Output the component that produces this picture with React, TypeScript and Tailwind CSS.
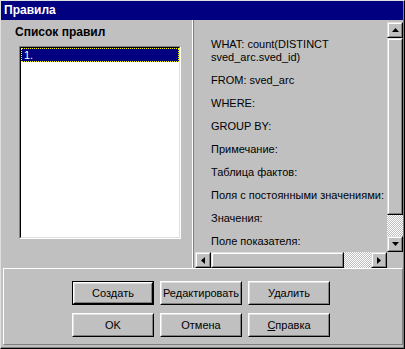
import React from 'react'

type Dir = 'up' | 'down' | 'left' | 'right'

function Arrow({ dir }: { dir: Dir }) {
  const pts: Record<Dir, string> = {
    up: '3.5,0 7,4 0,4',
    down: '0,0 7,0 3.5,4',
    left: '4,0 4,7 0,3.5',
    right: '0,0 4,3.5 0,7',
  }
  const vertical = dir === 'up' || dir === 'down'
  return (
    <svg width={vertical ? 7 : 4} height={vertical ? 4 : 7} viewBox={vertical ? '0 0 7 4' : '0 0 4 7'}>
      <polygon points={pts[dir]} fill="#000" />
    </svg>
  )
}

// win95 scroll button / thumb bevel
function Bevel({ className = '', children }: { className?: string; children?: React.ReactNode }) {
  return (
    <div className={`border border-t-[#dfdfdf] border-l-[#dfdfdf] border-r-black border-b-black ${className}`}>
      <div className="h-full w-full border border-t-white border-l-white border-r-[#808080] border-b-[#808080] flex items-center justify-center">
        {children}
      </div>
    </div>
  )
}

function Btn({ children, isDefault = false }: { children: React.ReactNode; isDefault?: boolean }) {
  return (
    <div className={`w-[82px] h-[24px] ${isDefault ? 'border border-black' : ''}`}>
      <div className="h-full border border-t-white border-l-white border-r-black border-b-black">
        <div className="h-full border border-t-[#dfdfdf] border-l-[#dfdfdf] border-r-[#808080] border-b-[#808080] flex items-center justify-center text-[11px]">
          {children}
        </div>
      </div>
    </div>
  )
}

const checker =
  'bg-[image:repeating-conic-gradient(#c0c0c0_0%_25%,#ffffff_0%_50%)] bg-[length:2px_2px]'

const fields = [
  'FROM: sved_arc',
  'WHERE:',
  'GROUP BY:',
  'Примечание:',
  'Таблица фактов:',
  'Поля с постоянными значениями:',
  'Значения:',
  'Поле показателя:',
]

export default function App() {
  return (
    <div className="w-[405px] h-[349px] bg-[#c0c0c0] border border-t-[#dfdfdf] border-l-[#dfdfdf] border-r-black border-b-black font-['Liberation_Sans',Arial,sans-serif] text-black">
      <div className="h-full flex flex-col border-r border-b border-r-[#808080] border-b-[#808080]">
        {/* Title bar */}
        <div className="h-[19px] bg-[#000080] text-white font-bold text-[12px] leading-[19px] pl-[3px]">
          Правила
        </div>

        <div className="h-[248px] flex">
          {/* Rules list */}
          <div className="w-[191px] flex flex-col">
            <div className="mt-[5px] pl-[14px] font-bold text-[12px] leading-[14px]">Список правил</div>
            <div className="mt-[7px] ml-[18px] w-[162px] h-[193px] border border-t-[#808080] border-l-[#808080] border-r-white border-b-white">
              <div className="h-full border border-t-black border-l-black border-r-[#dfdfdf] border-b-[#dfdfdf] bg-white">
                <div className="h-[14px] bg-[#000080] border border-dotted border-[#ffff00] text-white text-[11px] leading-[12px] pl-[2px]">
                  1.
                </div>
              </div>
            </div>
          </div>

          {/* Rule details */}
          <div className="flex-1 border-l border-l-white">
            <div className="h-full border-l border-l-[#808080] pt-[2px] flex flex-col">
              <div className="h-[230px] flex">
                <div className="flex-1 overflow-hidden pt-[16px] pl-[17px] text-[11px] leading-[13px] whitespace-nowrap">
                  <div className="mb-[10px]">
                    WHAT: count(DISTINCT
                    <br />
                    sved_arc.sved_id)
                  </div>
                  {fields.map((f) => (
                    <div key={f} className="mb-[10px]">
                      {f}
                    </div>
                  ))}
                </div>
                <div className="w-[16px] flex flex-col">
                  <Bevel className="h-[16px]">
                    <Arrow dir="up" />
                  </Bevel>
                  <Bevel className="h-[177px]" />
                  <div className={`flex-1 ${checker}`} />
                  <Bevel className="h-[16px]">
                    <Arrow dir="down" />
                  </Bevel>
                </div>
              </div>
              <div className="h-[16px] flex pl-[1px]">
                <div className="flex-1 flex">
                  <Bevel className="w-[16px]">
                    <Arrow dir="left" />
                  </Bevel>
                  <Bevel className="w-[133px]" />
                  <div className={`flex-1 ${checker}`} />
                  <Bevel className="w-[16px]">
                    <Arrow dir="right" />
                  </Bevel>
                </div>
                <div className="w-[16px]" />
              </div>
            </div>
          </div>
        </div>

        {/* Buttons */}
        <div className="ml-[2px] mb-[2px] h-[77px] border border-t-white border-l-white border-r-[#808080] border-b-[#808080] pt-[12px] pl-[68px] flex flex-col gap-[8px]">
          <div className="flex gap-[6px]">
            <Btn isDefault>Создать</Btn>
            <Btn>Редактировать</Btn>
            <Btn>Удалить</Btn>
          </div>
          <div className="flex gap-[6px]">
            <Btn>OK</Btn>
            <Btn>Отмена</Btn>
            <Btn>
              <span>
                <span className="underline">С</span>правка
              </span>
            </Btn>
          </div>
        </div>
      </div>
    </div>
  )
}
